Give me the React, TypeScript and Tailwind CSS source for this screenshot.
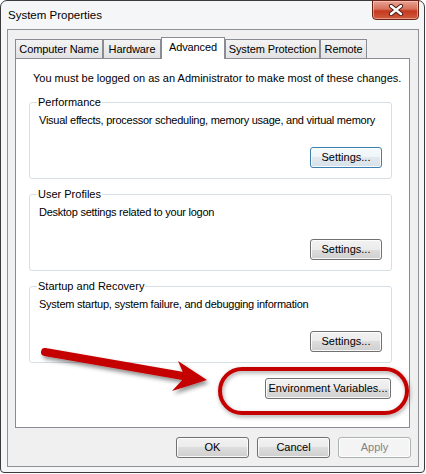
import React from 'react';

const btnBase =
  "h-[21px] rounded-[3px] border text-[11px] leading-none flex items-center justify-center whitespace-nowrap shadow-[inset_0_0_0_1px_rgba(255,255,255,0.85)]";
const btnNormal =
  "border-[#707070] text-black bg-[linear-gradient(to_bottom,#f2f2f2_0%,#ebebeb_50%,#dddddd_50%,#cfcfcf_100%)]";
const btnDefault =
  "border-[#3c7fb1] text-black bg-[linear-gradient(to_bottom,#f6fafd_0%,#eef4f8_50%,#e1e9ef_50%,#d6e1e9_100%)]";
const btnDisabled = "border-[#adb2b5] text-[#838383] bg-[#f4f4f4]";

function Button({ label, width, kind = 'normal' }: { label: string; width: string; kind?: 'normal' | 'default' | 'disabled' }) {
  const look = kind === 'default' ? btnDefault : kind === 'disabled' ? btnDisabled : btnNormal;
  return <button className={`${btnBase} ${look} ${width}`}>{label}</button>;
}

function Group({ title, desc, primary }: { title: string; desc: string; primary?: boolean }) {
  return (
    <fieldset className="ml-[13px] mr-[17px] min-w-0 rounded-[3px] border border-[#d5dfe5] px-[9px] pt-[3px] pb-[10px] shadow-[inset_0_0_0_1px_#ffffff]">
      <legend className="-ml-[2px] px-[1px] leading-[15px]">{title}</legend>
      <div className="whitespace-nowrap leading-[15px] tracking-[-0.25px]">{desc}</div>
      <div className="mt-[19px] flex justify-end">
        <Button label="Settings..." width="w-[72px]" kind={primary ? 'default' : 'normal'} />
      </div>
    </fieldset>
  );
}

const tabs = [
  { label: 'Computer Name', width: 'w-[88px]' },
  { label: 'Hardware', width: 'w-[58px]' },
  { label: 'Advanced', width: 'w-[64px]', active: true },
  { label: 'System Protection', width: 'w-[95px]' },
  { label: 'Remote', width: 'w-[47px]' },
];

export default function App() {
  return (
    <div className="relative w-[426px] h-[474px] bg-white text-[11px] text-black font-['Liberation_Sans',Arial,sans-serif]">
      <div className="flex flex-col w-[425px] h-[473px] border border-[#3b3b3b] rounded-t-[7px] rounded-b-[4px] bg-[#f4f6f8]">
        {/* title bar */}
        <div className="flex h-[28px] items-start justify-between">
          <span className="pl-[7px] pt-[7px] leading-[15px] text-[11.5px]">System Properties</span>
          <div className="-mt-px mr-[5px] flex h-[20px] w-[47px] items-center justify-center rounded-b-[4px] border border-[#6b2417] bg-[linear-gradient(to_bottom,#e8a493_0%,#d7705b_45%,#c4391f_55%,#d05a3c_100%)] shadow-[inset_0_0_0_1px_rgba(255,220,210,0.5)]">
            <svg width="16" height="12" viewBox="0 0 16 12">
              <path d="M3 2 L13 10 M13 2 L3 10" stroke="#4a1a12" strokeWidth="4.2" strokeLinecap="round" />
              <path d="M3 2 L13 10 M13 2 L3 10" stroke="#ffffff" strokeWidth="2.4" strokeLinecap="round" />
            </svg>
          </div>
        </div>

        {/* client area */}
        <div className="ml-[6px] mr-[5px] flex flex-col border border-[#8e9196] bg-[#f0f0f0] pt-[7px] pb-[8px]">
          <div className="ml-[7px] flex h-[21px] items-end whitespace-nowrap tracking-[-0.1px]">
            {tabs.map((t) =>
              t.active ? (
                <div
                  key={t.label}
                  className={`relative z-10 -mb-px flex h-[22px] items-start justify-center border border-b-0 border-[#898c95] bg-white pt-[2px] leading-[15px] ${t.width}`}
                >
                  {t.label}
                </div>
              ) : (
                <div
                  key={t.label}
                  className={`flex h-[19px] items-center justify-center border border-b-0 border-[#898c95] bg-[linear-gradient(to_bottom,#f3f3f3,#e2e2e2)] leading-[15px] ${t.width}`}
                >
                  {t.label}
                </div>
              )
            )}
          </div>

          <div className="ml-[7px] mr-[8px] h-[370px] border border-[#898c95] bg-white">
            <p className="whitespace-nowrap pl-[17px] pt-[12px] leading-[15px]">
              You must be logged on as an Administrator to make most of these changes.
            </p>
            <div className="mt-[9px]">
              <Group title="Performance" desc="Visual effects, processor scheduling, memory usage, and virtual memory" primary />
            </div>
            <div className="mt-[8px]">
              <Group title="User Profiles" desc="Desktop settings related to your logon" />
            </div>
            <div className="mt-[8px]">
              <Group title="Startup and Recovery" desc="System startup, system failure, and debugging information" />
            </div>
            <div className="mt-[15px] mr-[18px] flex justify-end">
              <Button label="Environment Variables..." width="w-[126px]" />
            </div>
          </div>

          <div className="mt-[9px] mr-[7px] flex justify-end gap-[8px]">
            <Button label="OK" width="w-[73px]" />
            <Button label="Cancel" width="w-[73px]" />
            <Button label="Apply" width="w-[73px]" kind="disabled" />
          </div>
        </div>
      </div>

      {/* annotation: red arrow and circle drawn over the dialog */}
      <svg className="pointer-events-none absolute inset-0" width="426" height="474" viewBox="0 0 426 474">
        <defs>
          <filter id="shadow" x="-20%" y="-40%" width="140%" height="180%">
            <feDropShadow dx="2" dy="3" stdDeviation="2" floodColor="#000" floodOpacity="0.45" />
          </filter>
          <filter id="glow" x="-10%" y="-40%" width="120%" height="180%">
            <feDropShadow dx="1" dy="2" stdDeviation="2" floodColor="#000" floodOpacity="0.35" />
          </filter>
        </defs>
        <g filter="url(#shadow)" fill="#c40000">
          <path d="M45 352 L186 376.5" stroke="#c40000" strokeWidth="8" strokeLinecap="round" />
          <polygon points="178,361 207,380 172,391 185,377" />
        </g>
        <rect x="220" y="369" width="187" height="44" rx="22" fill="none" stroke="#c40000" strokeWidth="4" filter="url(#glow)" />
      </svg>
    </div>
  );
}
